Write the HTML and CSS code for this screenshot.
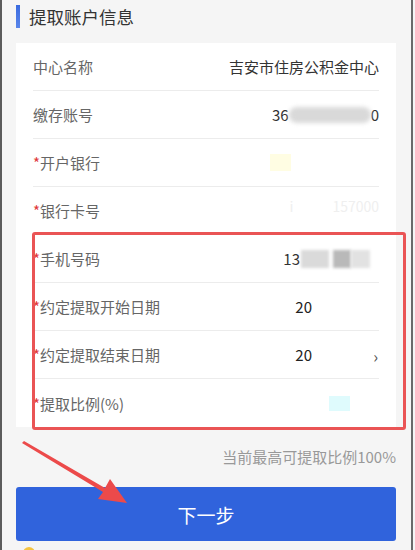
FILE: index.html
```html
<!DOCTYPE html>
<html lang="zh-CN">
<head>
<meta charset="utf-8">
<title>提取账户信息</title>
<link rel="stylesheet" href="styles.css">
</head>
<body>
<div class="page">
  <div class="title"><span class="bar"></span><span class="title-text">提取账户信息</span></div>
  <div class="card">
    <div class="row"><span class="label">中心名称</span><span class="value">吉安市住房公积金中心</span></div>
    <div class="row"><span class="label">缴存账号</span><span class="value">36<span class="blur blur-acct"></span>0</span></div>
    <div class="row"><span class="label"><i class="req">*</i>开户银行</span><span class="value"><span class="tint tint-yellow"></span></span></div>
    <div class="row"><span class="label"><i class="req">*</i>银行卡号</span><span class="value faint">ⅰ<span class="gap"></span>157000</span></div>
    <div class="row"><span class="label"><i class="req">*</i>手机号码</span><span class="value v-phone">13<span class="px px1"></span><span class="px px2"></span><span class="px px3"></span></span></div>
    <div class="row"><span class="label"><i class="req">*</i>约定提取开始日期</span><span class="value v-date">20</span></div>
    <div class="row"><span class="label"><i class="req">*</i>约定提取结束日期</span><span class="value v-date">20</span><span class="chev">›</span></div>
    <div class="row"><span class="label"><i class="req">*</i>提取比例(%)</span><span class="value v-ratio"><span class="tint tint-cyan"></span></span></div>
  </div>
  <div class="note">当前最高可提取比例100%</div>
  <button class="next">下一步</button>
  <div class="foot"><span class="dot"></span></div>

  <div class="highlight"></div>
  <svg class="arrow" width="140" height="80" viewBox="0 0 140 80">
    <polygon points="20,0 101,47 106,38 123,62 94,58 99,51 18,2" fill="#ec4a4a"/>
  </svg>
</div>
</body>
</html>
```
FILE: styles.css
```css
* { box-sizing: border-box; }
html, body { margin: 0; padding: 0; }
body {
  background: #f5f5f5;
  font-family: "Noto Sans CJK SC", "Noto Sans", sans-serif;
  width: 415px;
  height: 550px;
  overflow: hidden;
}
.page {
  position: relative;
  margin-right: 2px;
  height: 550px;
  border-left: 2px solid #5c5c5c;
  border-right: 2px solid #6a6a6a;
  padding: 5px 15px 0 14px;
}
.title {
  display: flex;
  align-items: center;
  height: 23px;
  margin-bottom: 15px;
}
.bar {
  width: 4px;
  height: 23px;
  background: linear-gradient(#3a6be0, #5a86ea);
  margin-right: 9px;
}
.title-text {
  font-size: 17.5px;
  color: #333;
  line-height: 23px;
}
.card {
  background: #fff;
  padding: 0 17px;
}
.row {
  display: flex;
  align-items: center;
  height: 48px;
  border-bottom: 1px solid #ececec;
  position: relative;
}
.row:last-child { border-bottom: none; }
.label {
  font-size: 15px;
  color: #666;
  flex: 1;
  white-space: nowrap;
}
.req {
  font-style: normal;
  color: #e0383a;
}
.value {
  font-size: 15px;
  color: #333;
  display: flex;
  align-items: center;
}
.blur {
  display: inline-block;
  background: #d9d9d9;
  filter: blur(2px);
  border-radius: 8px;
}
.blur-acct { width: 82px; height: 16px; }
.tint { display: inline-block; width: 21px; height: 17px; }
.tint-yellow { background: #fffde3; margin-right: 88px; }
.tint-cyan { background: #dffbfd; height: 15px; margin-right: 29px; }
.faint { color: #efefef; font-size: 14px; margin-top: -10px; }
.gap { display: inline-block; width: 34px; }
.v-phone { margin-right: 9px; }
.px { display: inline-block; height: 18px; filter: blur(1.5px); }
.px1 { width: 28px; background: #dadada; margin-left: 1px; }
.px2 { width: 18px; background: #b9b9b9; margin-left: 4px; }
.px3 { width: 19px; background: #e2e2e2; }
.v-date { margin-right: 67px; color: #222; }
.chev {
  position: absolute;
  right: 1px;
  top: 13px;
  font-size: 16px;
  color: #555;
}
.note {
  text-align: right;
  font-size: 15px;
  color: #999;
  line-height: 20px;
  margin-top: 20px;
}
.next {
  display: block;
  width: 100%;
  height: 54px;
  margin-top: 20px;
  border: none;
  border-radius: 3px;
  background: #3063dc;
  color: #fff;
  font-family: "Noto Sans CJK SC", sans-serif;
  font-size: 19px;
}
.foot { height: 10px; position: relative; }
.dot {
  position: absolute;
  left: 7px;
  top: 6px;
  width: 12px;
  height: 12px;
  border-radius: 50%;
  background: #f5c440;
}
.highlight {
  position: absolute;
  left: 30px;
  top: 232px;
  width: 374px;
  height: 198px;
  border: 3.5px solid #ea5455;
  border-radius: 3px;
}
.arrow {
  position: absolute;
  left: 2px;
  top: 441px;
}
```
